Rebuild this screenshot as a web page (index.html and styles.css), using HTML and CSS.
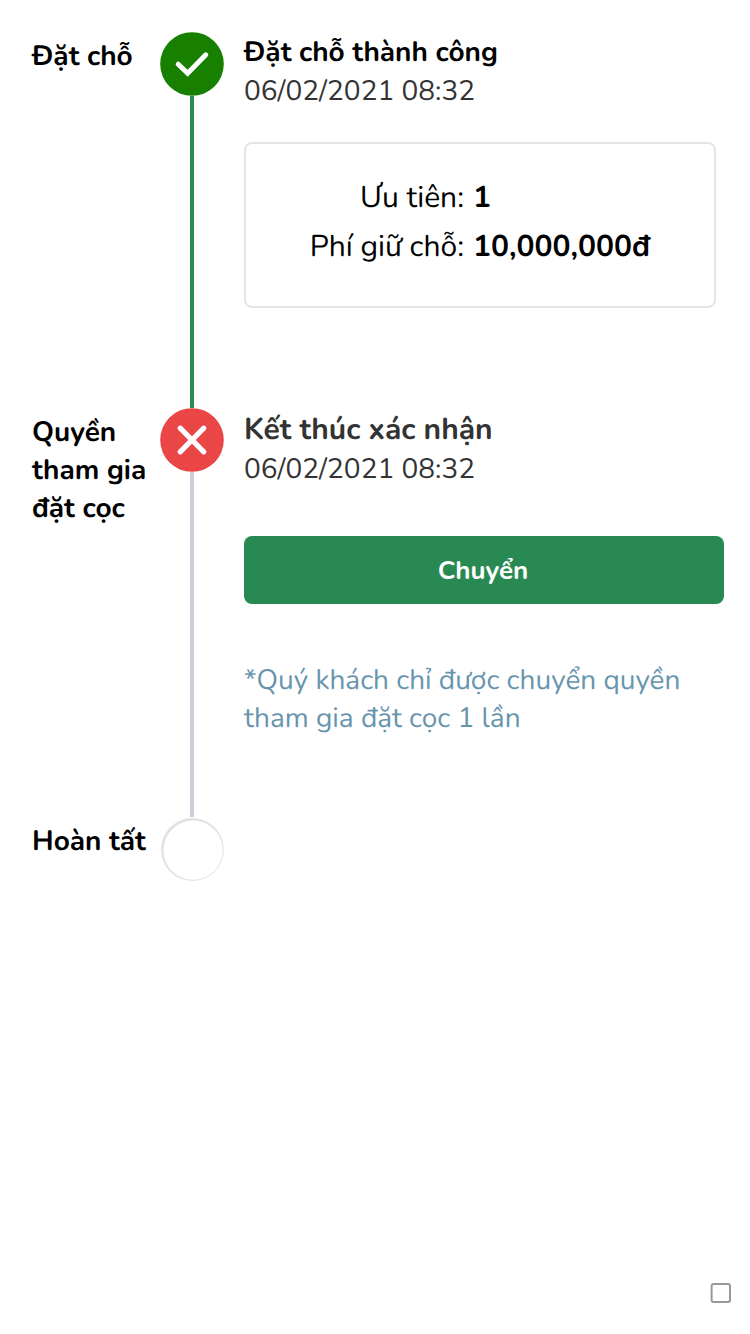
FILE: index.html
```html
<!DOCTYPE html>
<html lang="vi">
<head>
<meta charset="utf-8">
<title>Đặt chỗ</title>
<link rel="stylesheet" href="styles.css">
</head>
<body>
<main class="timeline">
  <section class="step step-booking">
    <h2 class="label">Đặt chỗ</h2>
    <div class="rail">
      <svg class="marker" viewBox="0 0 64 64"><circle cx="32" cy="32" r="31.8" fill="#178000"/><path d="M18.2 32.2 27.7 41.2 45.8 22.8" fill="none" stroke="#fff" stroke-width="4.9" stroke-linecap="round" stroke-linejoin="miter"/></svg>
      <div class="line line-done"></div>
    </div>
    <div class="content">
      <h3 class="title">Đặt chỗ thành công</h3>
      <p class="date">06/02/2021 08:32</p>
      <dl class="card">
        <dt>Ưu tiên:</dt><dd>1</dd>
        <dt>Phí giữ chỗ:</dt><dd>10,000,000đ</dd>
      </dl>
    </div>
  </section>
  <section class="step step-deposit">
    <h2 class="label">Quyền<br>tham gia<br>đặt cọc</h2>
    <div class="rail">
      <svg class="marker" viewBox="0 0 64 64"><circle cx="32" cy="32" r="31.8" fill="#ea4646"/><path d="M20.2 20.2 43.8 43.8M43.8 20.2 20.2 43.8" fill="none" stroke="#fff" stroke-width="5.2" stroke-linecap="round"/></svg>
      <div class="line"></div>
    </div>
    <div class="content">
      <h3 class="title title-ended">Kết thúc xác nhận</h3>
      <p class="date">06/02/2021 08:32</p>
      <button class="transfer" type="button">Chuyển</button>
      <p class="note">*Quý khách chỉ được chuyển quyền<br>tham gia đặt cọc 1 lần</p>
    </div>
  </section>
  <section class="step step-finish">
    <h2 class="label">Hoàn tất</h2>
    <div class="rail">
      <svg class="marker" viewBox="0 0 64 64"><circle cx="32.4" cy="31.5" r="31.4" fill="#e2e2e2"/><circle cx="33.1" cy="32.2" r="29.6" fill="#fff"/></svg>
    </div>
  </section>
</main>
<footer class="corner">
  <svg width="22" height="22" viewBox="0 0 22 22"><rect x="1.6" y="2" width="18.4" height="18" rx="2" fill="#fff" stroke="#999" stroke-width="2"/></svg>
</footer>
</body>
</html>
```
FILE: styles.css
```css
* { box-sizing: border-box; }
body {
  margin: 0;
  height: 1334px;
  display: flex;
  flex-direction: column;
  justify-content: space-between;
  overflow: hidden;
  background: #fff;
  color: #000;
  font: 28px/38px Nunito, Lato, "Noto Sans", sans-serif;
  text-rendering: geometricPrecision;
}
h2, h3, p, dl, dd { margin: 0; font-size: inherit; }
.timeline { padding: 32px 26px 0 32px; }
.step { display: grid; grid-template-columns: 128px 64px 480px; }
.step-booking { height: 376px; }
.step-deposit { height: 410px; }
.label { padding-top: 5px; font-weight: 700; white-space: nowrap; }
.step-finish .label { padding-top: 4px; }
.rail { display: flex; flex-direction: column; align-items: center; }
.marker { display: block; width: 64px; height: 64px; flex: none; }
.line { width: 4px; flex: 1; background: #cbcedb; }
.step-deposit .line { margin-bottom: 1px; }
.line-done { background: #288c52; }
.content { margin-left: 20px; width: 480px; white-space: nowrap; }
.title { padding-top: 1px; font-weight: 700; }
.date { padding-top: 1px; color: #333; }
.title-ended { padding-top: 2px; color: #333; font-size: 30px; line-height: 40px; }
.step-deposit .date { padding-top: 0; }
.card {
  margin-top: 32px;
  width: 472px;
  height: 166px;
  padding-top: 29px;
  border: 2px solid #e4e4e4;
  border-radius: 8px;
  display: grid;
  grid-template-columns: 218px 1fr;
  grid-auto-rows: 49px;
  column-gap: 9px;
  font-size: 30px;
  line-height: 49px;
}
.card dt { text-align: right; }
.card dd { font-weight: 700; }
.transfer {
  display: block;
  width: 480px;
  height: 68px;
  margin-top: 48px;
  padding: 2px 2px 0 0;
  border: 0;
  border-radius: 8px;
  background: #288a52;
  color: #fff;
  font: 700 26px/66px Nunito, Lato, "Noto Sans", sans-serif;
}
.note { margin-top: 57px; color: #6895ad; }
.corner { display: flex; justify-content: flex-end; padding: 0 18px 30px 0; }
.corner svg { display: block; }
```
